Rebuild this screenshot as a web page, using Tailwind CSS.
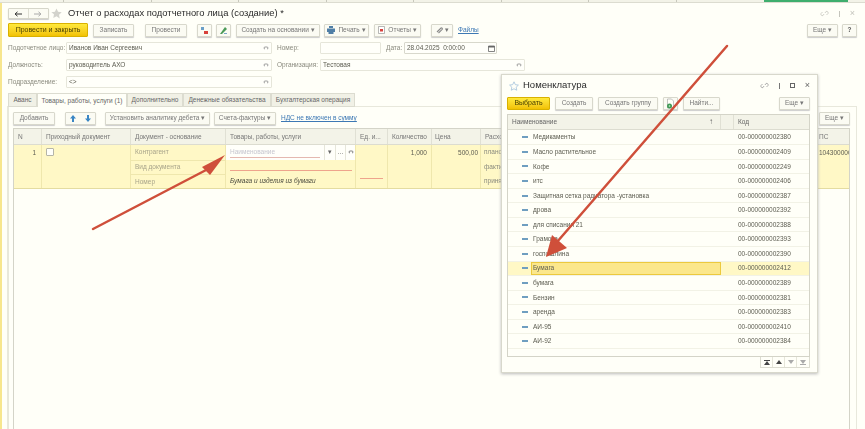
<!DOCTYPE html>
<html lang="ru">
<head>
<meta charset="UTF-8">
<title>Отчет о расходах подотчетного лица</title>
<script src="https://cdn.jsdelivr.net/npm/@tailwindcss/browser@4"></script>
</head>
<body class="bg-[#fffff8] font-['Liberation_Sans',sans-serif] text-[6.5px] text-[#5c5c50] overflow-hidden">
<div class="relative w-[865px] h-[429px] overflow-hidden whitespace-nowrap blur-[0.5px]">

  <!-- top strip with open sections -->
  <div class="flex h-[3px] bg-[#f3f3e8] border-b border-[#dcdcd0]">
    <div class="w-[64px] border-r border-[#c8c8bc]"></div>
    <div class="w-[87.500px] border-r border-[#c8c8bc]"></div>
    <div class="w-[87.500px] border-r border-[#c8c8bc]"></div>
    <div class="w-[87.500px] border-r border-[#c8c8bc]"></div>
    <div class="w-[87.500px] border-r border-[#c8c8bc]"></div>
    <div class="w-[87.500px] border-r border-[#c8c8bc]"></div>
    <div class="w-[87.500px] border-r border-[#c8c8bc]"></div>
    <div class="w-[87.500px] border-r border-[#c8c8bc]"></div>
    <div class="ml-[87.500px] w-[84px] bg-[#3fae6e]"></div>
  </div>
  <div class="flex h-[426px]">
    <div class="w-[2px] bg-[#f7e68e] shrink-0"></div>
    <div class="flex-1 pl-[6px] pr-[9px] flex flex-col">

      <!-- title row -->
      <div class="flex items-center h-[19px] mt-[1px]">
        <div class="flex h-[11px] w-[41px] border border-[#d6d6ca] rounded-[1px] bg-[#fbfbf3] shadow-[0_1px_1px_#ccc]">
          <div class="w-1/2 flex items-center justify-center border-r border-[#deded2]">
            <svg width="8" height="6" viewBox="0 0 8 6"><path d="M8 3H2M3.500 .8 1 3l2.500 2.200" fill="none" stroke="#333" stroke-width="1"/></svg>
          </div>
          <div class="w-1/2 flex items-center justify-center">
            <svg width="8" height="6" viewBox="0 0 8 6"><path d="M0 3h6M4.500 .8 7 3 4.500 5.200" fill="none" stroke="#aaa" stroke-width="1"/></svg>
          </div>
        </div>
        <svg class="ml-[2px]" width="11" height="11" viewBox="0 0 24 24"><path d="m12 1 3.400 7.300 7.900 1-5.800 5.500 1.500 7.900L12 18l-7 3.700 1.500-7.900L.7 9.300l7.900-1z" fill="#d3d3cc"/></svg>
        <span class="ml-[6px] text-[9.400px] text-[#2b2b2b]">Отчет о расходах подотчетного лица (создание) *</span>
        <div class="ml-auto mr-[-5px] flex items-center gap-[10px]">
          <svg width="9" height="9" viewBox="0 0 9 9"><path d="M4 5 3 6.500a1.500 1.500 0 0 1-2-2L2.500 3M5 4l1-1.500a1.500 1.500 0 0 1 2 2L6.500 6" fill="none" stroke="#c4c4bc" stroke-width=".8"/></svg>
          <div class="w-[1px] h-[6px] bg-[#c4c4bc]"></div>
          <span class="text-[9px] leading-none text-[#c4c4bc]">×</span>
        </div>
      </div>

      <!-- command bar -->
      <div class="flex items-center h-[14px] text-[#777]">
        <button class="w-[80px] h-[14px] rounded-[1px] bg-gradient-to-b from-[#ffe93a] to-[#f2c200] border border-[#d9b100] text-[#4a4000] text-[7px]">Провести и закрыть</button>
        <button class="ml-[5px] w-[41px] h-[13px] border border-[#d8d8cc] rounded-[1px] bg-[#fbfbf3] shadow-[0_1px_1px_#ccc]">Записать</button>
        <button class="ml-[11px] w-[42px] h-[13px] border border-[#d8d8cc] rounded-[1px] bg-[#fbfbf3] shadow-[0_1px_1px_#ccc]">Провести</button>
        <button class="ml-[10px] w-[15px] h-[13px] border border-[#d8d8cc] rounded-[1px] bg-[#fbfbf3] shadow-[0_1px_1px_#ccc] flex items-center justify-center">
          <svg width="9" height="9" viewBox="0 0 9 9"><path d="M1 1h3v3H1z" fill="#6a9fc8"/><path d="M4 5h4v3H4z" fill="#d8413c"/></svg>
        </button>
        <button class="ml-[4px] w-[15px] h-[13px] border border-[#d8d8cc] rounded-[1px] bg-[#fbfbf3] shadow-[0_1px_1px_#ccc] flex items-center justify-center">
          <svg width="9" height="9" viewBox="0 0 9 9"><path d="M1 8 6 1l2 2-5 5z" fill="#4b9a58"/><path d="M5 7h3v1H5z" fill="#7aa6c8"/></svg>
        </button>
        <button class="ml-[5px] w-[84px] h-[13px] border border-[#d8d8cc] rounded-[1px] bg-[#fbfbf3] shadow-[0_1px_1px_#ccc]">Создать на основании ▾</button>
        <button class="ml-[4px] w-[45px] h-[13px] border border-[#d8d8cc] rounded-[1px] bg-[#fbfbf3] shadow-[0_1px_1px_#ccc] flex items-center justify-center gap-[3px]">
          <svg width="8" height="8" viewBox="0 0 8 8"><path d="M2 0h4v2H2zM0 2.500h8V6H6.500v2h-5V6H0z" fill="#4f7ea6"/></svg>Печать ▾
        </button>
        <button class="ml-[5px] w-[47px] h-[13px] border border-[#d8d8cc] rounded-[1px] bg-[#fbfbf3] shadow-[0_1px_1px_#ccc] flex items-center justify-center gap-[3px]">
          <svg width="7" height="8" viewBox="0 0 7 8"><path d="M.5.500h6v7h-6z" fill="#fff" stroke="#999" stroke-width=".7"/><path d="M2 3h3v2.500H2z" fill="#d8413c"/></svg>Отчеты ▾
        </button>
        <button class="ml-[10px] w-[22px] h-[13px] border border-[#d8d8cc] rounded-[1px] bg-[#fbfbf3] shadow-[0_1px_1px_#ccc] flex items-center justify-center gap-[2px]">
          <svg width="7" height="7" viewBox="0 0 7 7"><path d="M1 5 5 1a1 1 0 0 1 1.300 1.300L2.500 6" fill="none" stroke="#888" stroke-width="1.100"/></svg>▾
        </button>
        <a class="ml-[5px] text-[#3d78b4] underline">Файлы</a>
        <button class="ml-auto mr-[4px] w-[31px] h-[13px] border border-[#d8d8cc] rounded-[1px] bg-[#fbfbf3] shadow-[0_1px_1px_#ccc]">Еще ▾</button>
        <button class="mr-[-7px] w-[15px] h-[13px] border border-[#d8d8cc] rounded-[1px] bg-[#fbfbf3] shadow-[0_1px_1px_#ccc] font-bold text-[#555]">?</button>
      </div>

      <!-- header fields -->
      <div class="flex items-center h-[12px] mt-[5px]">
        <span class="w-[58px] text-[#8a8a7e]">Подотчетное лицо:</span>
        <div class="w-[206px] h-[12px] border border-[#e6e6da] rounded-[1px] bg-[#fffffa] flex items-center justify-between px-[2px]"><span>Иванов Иван Сергеевич</span><svg width="6" height="6" viewBox="0 0 6 6"><path d="M2 4a1 1 0 0 1 0-2h2a1 1 0 0 1 0 2" fill="none" stroke="#888" stroke-width=".8"/></svg></div>
        <span class="ml-[5px] w-[43px] text-[#8a8a7e]">Номер:</span>
        <div class="w-[61px] h-[12px] border border-[#e6e6da] rounded-[1px] bg-[#fffffa]"></div>
        <span class="ml-[5px] w-[18px] text-[#8a8a7e]">Дата:</span>
        <div class="w-[93px] h-[12px] border border-[#d8d8cc] rounded-[1px] bg-[#fffffa] flex items-center justify-between pl-[2px] pr-[1px]"><span>28.04.2025 &nbsp;0:00:00</span><svg width="7" height="7" viewBox="0 0 7 7"><path d="M.5 1h6v5.500h-6z" fill="none" stroke="#666" stroke-width=".8"/><path d="M.5 1h6v1.500h-6z" fill="#666"/></svg></div>
      </div>
      <div class="flex items-center h-[12px] mt-[5px]">
        <span class="w-[58px] text-[#8a8a7e]">Должность:</span>
        <div class="w-[206px] h-[12px] border border-[#e6e6da] rounded-[1px] bg-[#fffffa] flex items-center justify-between px-[2px]"><span>руководитель АХО</span><svg width="6" height="6" viewBox="0 0 6 6"><path d="M2 4a1 1 0 0 1 0-2h2a1 1 0 0 1 0 2" fill="none" stroke="#888" stroke-width=".8"/></svg></div>
        <span class="ml-[5px] w-[43px] text-[#8a8a7e]">Организация:</span>
        <div class="w-[205px] h-[12px] border border-[#e6e6da] rounded-[1px] bg-[#fffffa] flex items-center justify-between px-[2px]"><span>Тестовая</span><svg width="6" height="6" viewBox="0 0 6 6"><path d="M2 4a1 1 0 0 1 0-2h2a1 1 0 0 1 0 2" fill="none" stroke="#888" stroke-width=".8"/></svg></div>
      </div>
      <div class="flex items-center h-[12px] mt-[5px]">
        <span class="w-[58px] text-[#8a8a7e]">Подразделение:</span>
        <div class="w-[206px] h-[12px] border border-[#e6e6da] rounded-[1px] bg-[#fffffa] flex items-center justify-between px-[2px]"><span>&lt;&gt;</span><svg width="6" height="6" viewBox="0 0 6 6"><path d="M2 4a1 1 0 0 1 0-2h2a1 1 0 0 1 0 2" fill="none" stroke="#888" stroke-width=".8"/></svg></div>
      </div>

      <!-- tabs -->
      <div class="flex h-[14px] mt-[5px] relative z-10 text-[#666]">
        <div class="w-[29px] flex items-center justify-center bg-[#f1f1e6] border border-[#dcdcd0]">Аванс</div>
        <div class="w-[90px] flex items-center justify-center bg-[#fffff8] border-t border-x border-[#dcdcd0]">Товары, работы, услуги (1)</div>
        <div class="w-[56px] flex items-center justify-center bg-[#f1f1e6] border border-[#dcdcd0]">Дополнительно</div>
        <div class="w-[88px] flex items-center justify-center bg-[#f1f1e6] border border-[#dcdcd0]">Денежные обязательства</div>
        <div class="w-[84px] flex items-center justify-center bg-[#f1f1e6] border border-[#dcdcd0]">Бухгалтерская операция</div>
      </div>

      <!-- tab panel -->
      <div class="flex-1 mt-[-1px] ml-[-1px] mr-[-7px] border-l-2 border-r border-t border-[#e8e8dc] pl-[4px] pr-[6px] flex flex-col">
        <div class="flex items-center h-[14px] mt-[4px] text-[#777]">
          <button class="w-[42px] h-[13px] border border-[#d8d8cc] rounded-[1px] bg-[#fbfbf3] shadow-[0_1px_1px_#ccc]">Добавить</button>
          <div class="ml-[10px] flex w-[31px] h-[13px] border border-[#d8d8cc] rounded-[1px] bg-[#fbfbf3] shadow-[0_1px_1px_#ccc]">
            <div class="w-1/2 flex items-center justify-center"><svg width="6" height="7" viewBox="0 0 6 7"><path d="M3 0 6 3.500H4V7H2V3.500H0z" fill="#3a86c4"/></svg></div>
            <div class="w-1/2 flex items-center justify-center"><svg width="6" height="7" viewBox="0 0 6 7"><path d="M3 7 0 3.500h2V0h2v3.500h2z" fill="#3a86c4"/></svg></div>
          </div>
          <button class="ml-[9px] w-[105px] h-[13px] border border-[#d8d8cc] rounded-[1px] bg-[#fbfbf3] shadow-[0_1px_1px_#ccc]">Установить аналитику дебета ▾</button>
          <button class="ml-[4px] w-[62px] h-[13px] border border-[#d8d8cc] rounded-[1px] bg-[#fbfbf3] shadow-[0_1px_1px_#ccc]">Счета-фактуры ▾</button>
          <a class="ml-[5px] text-[#3d78b4] underline">НДС не включен в сумму</a>
          <button class="ml-auto w-[31px] h-[13px] border border-[#d8d8cc] rounded-[1px] bg-[#fbfbf3] shadow-[0_1px_1px_#ccc]">Еще ▾</button>
        </div>

        <!-- document table -->
        <div class="mt-[3px] flex-1 border-l border-r border-t border-[#d4d4c8]">
          <div class="grid grid-cols-[28px_89px_95px_130px_32px_44px_49px_337px_1fr] h-[16px] bg-[#f3f3e8] border-b border-[#dcdcd0] text-[#777]">
            <div class="flex items-center pl-[4px] border-r border-[#e0e0d4]">N</div>
            <div class="flex items-center pl-[4px] border-r border-[#e0e0d4]">Приходный документ</div>
            <div class="flex items-center pl-[4px] border-r border-[#e0e0d4]">Документ - основание</div>
            <div class="flex items-center pl-[4px] border-r border-[#e0e0d4]">Товары, работы, услуги</div>
            <div class="flex items-center pl-[4px] border-r border-[#e0e0d4]">Ед. и...</div>
            <div class="flex items-center pl-[4px] border-r border-[#e0e0d4]">Количество</div>
            <div class="flex items-center pl-[3px] border-r border-[#e0e0d4]">Цена</div>
            <div class="flex items-center pl-[4px] border-r border-[#e0e0d4]">Расход</div>
            <div class="flex items-center pl-[1px]">ПС</div>
          </div>
          <div class="grid grid-cols-[28px_89px_95px_130px_32px_44px_49px_337px_1fr] h-[44px] bg-[#fff8c6] border-b border-[#e4dca0]">
            <div class="text-right pr-[5px] pt-[3px] border-r border-[#efe7ad]">1</div>
            <div class="pl-[4px] pt-[3px] border-r border-[#efe7ad]"><div class="w-[8px] h-[8px] border border-[#b5b5a8] bg-[#fffffa] rounded-[1px]"></div></div>
            <div class="border-r border-[#efe7ad] text-[#a8a48a] flex flex-col">
              <div class="h-[14.500px] pl-[4px] flex items-center">Контрагент</div>
              <div class="h-[14.500px] pl-[4px] flex items-center border-t border-[#efe7ad]">Вид документа</div>
              <div class="h-[14px] pl-[4px] flex items-center border-t border-[#efe7ad]">Номер</div>
            </div>
            <div class="border-r border-[#efe7ad] flex flex-col">
              <div class="h-[14.500px] bg-[#fffffa] flex items-center">
                <div class="ml-[4px] w-[90px] border-b border-[#e4b8b0] text-[#c6c6cf] leading-[10px]">Наименование</div>
                <div class="ml-auto flex h-full text-[#666]">
                  <span class="w-[11px] flex items-center justify-center border-l border-[#e6e6da]">▾</span>
                  <span class="w-[10px] flex items-center justify-center border-l border-[#e6e6da]">...</span>
                  <span class="w-[10px] flex items-center justify-center border-l border-[#e6e6da]"><svg width="6" height="6" viewBox="0 0 6 6"><path d="M2 4a1 1 0 0 1 0-2h2a1 1 0 0 1 0 2" fill="none" stroke="#666" stroke-width=".8"/></svg></span>
                </div>
              </div>
              <div class="h-[14.500px] pl-[4px] pr-[3px] pt-[2px]"><div class="h-[9px] border-b border-[#eea48c]"></div></div>
              <div class="h-[14px] pl-[4px] flex items-center italic text-[#4a4a3e]">Бумага и изделия из бумаги</div>
            </div>
            <div class="border-r border-[#efe7ad] px-[4px] pt-[33px]"><div class="border-b border-[#eea48c]"></div></div>
            <div class="border-r border-[#efe7ad] text-right pr-[4px] pt-[3px]">1,000</div>
            <div class="border-r border-[#efe7ad] text-right pr-[2px] pt-[3px]">500,00</div>
            <div class="border-r border-[#efe7ad] pl-[3px] text-[#8a8a7e] flex flex-col">
              <div class="h-[14.500px] flex items-center">плановые</div>
              <div class="h-[14.500px] flex items-center">фактические</div>
              <div class="h-[14px] flex items-center">принятые</div>
            </div>
            <div class="pt-[3px] pl-[1px] overflow-hidden">1043000004</div>
          </div>
        </div>
      </div>
    </div>
    <div class="w-[6px]"></div>
  </div>

  <!-- Номенклатура dialog -->
  <div class="absolute left-[501px] top-[74px] w-[317px] h-[299px] bg-[#fffff8] border border-[#d8d8cc] shadow-[0_1px_3px_#bbb] pl-[5px] pr-[7px] flex flex-col">
    <div class="flex items-center h-[21px]">
      <svg width="10" height="10" viewBox="0 0 24 24" class="ml-[2px]"><path d="m12 2 3.200 6.800 7.400 1-5.400 5.100 1.400 7.300L12 18.700l-6.600 3.500 1.400-7.300-5.400-5.100 7.400-1z" fill="none" stroke="#a6c4dc" stroke-width="2"/></svg>
      <span class="ml-[4px] text-[9.500px] text-[#2b2b2b]">Номенклатура</span>
      <div class="ml-auto flex items-center gap-[10px]">
        <svg width="9" height="9" viewBox="0 0 9 9"><path d="M4 5 3 6.500a1.500 1.500 0 0 1-2-2L2.500 3M5 4l1-1.500a1.500 1.500 0 0 1 2 2L6.500 6" fill="none" stroke="#999" stroke-width=".8"/></svg>
        <div class="w-[1px] h-[6px] bg-[#777]"></div>
        <div class="w-[5px] h-[5px] border border-[#666]"></div>
        <span class="text-[9px] leading-none text-[#666]">×</span>
      </div>
    </div>
    <div class="flex items-center h-[14px] text-[#777]">
      <button class="w-[43px] h-[13px] rounded-[1px] bg-gradient-to-b from-[#ffe93a] to-[#f2c200] border border-[#d9b100] text-[#4a4000] text-[7px]">Выбрать</button>
      <button class="ml-[5px] w-[38px] h-[13px] border border-[#d8d8cc] rounded-[1px] bg-[#fbfbf3] shadow-[0_1px_1px_#ccc]">Создать</button>
      <button class="ml-[5px] w-[60px] h-[13px] border border-[#d8d8cc] rounded-[1px] bg-[#fbfbf3] shadow-[0_1px_1px_#ccc]">Создать группу</button>
      <button class="ml-[5px] w-[15px] h-[13px] border border-[#d8d8cc] rounded-[1px] bg-[#fbfbf3] shadow-[0_1px_1px_#ccc] flex items-center justify-center">
        <svg width="9" height="11" viewBox="0 0 9 11"><path d="M1.500 1h4l2 2v7h-6z" fill="#fffff8" stroke="#aaa" stroke-width=".7"/><circle cx="3.500" cy="8" r="2.500" fill="#3f9a55"/><circle cx="3.500" cy="8" r=".8" fill="#d8ecd8"/></svg>
      </button>
      <button class="ml-[5px] w-[37px] h-[13px] border border-[#d8d8cc] rounded-[1px] bg-[#fbfbf3] shadow-[0_1px_1px_#ccc]">Найти...</button>
      <button class="ml-auto w-[31px] h-[13px] border border-[#d8d8cc] rounded-[1px] bg-[#fbfbf3] shadow-[0_1px_1px_#ccc]">Еще ▾</button>
    </div>
    <div class="mt-[4px] h-[243px] border border-[#d4d4c8] flex flex-col">
      <div class="grid grid-cols-[213px_13px_1fr] h-[15px] shrink-0 bg-[#f3f3e8] border-b border-[#dcdcd0] text-[#666]">
        <div class="flex items-center justify-between pl-[4px] pr-[7px] border-r border-[#e0e0d4]"><span>Наименование</span><span class="text-[8px]">↑</span></div>
        <div class="border-r border-[#e0e0d4]"></div>
        <div class="flex items-center pl-[4px]">Код</div>
      </div>
      <div class="flex flex-col mt-[0.5px]">
        <div class="grid grid-cols-[213px_13px_1fr] h-[14.570px] items-center border-b border-[#f2f2e6]"><div class="flex items-center pl-[14px] gap-[5px]"><span class="w-[6px] h-[2px] bg-[#6f9ec0]"></span>Медикаменты</div><div></div><div class="pl-[4px]">00-000000002380</div></div>
        <div class="grid grid-cols-[213px_13px_1fr] h-[14.570px] items-center border-b border-[#f2f2e6]"><div class="flex items-center pl-[14px] gap-[5px]"><span class="w-[6px] h-[2px] bg-[#6f9ec0]"></span>Масло растительное</div><div></div><div class="pl-[4px]">00-000000002409</div></div>
        <div class="grid grid-cols-[213px_13px_1fr] h-[14.570px] items-center border-b border-[#f2f2e6]"><div class="flex items-center pl-[14px] gap-[5px]"><span class="w-[6px] h-[2px] bg-[#6f9ec0]"></span>Кофе</div><div></div><div class="pl-[4px]">00-000000002249</div></div>
        <div class="grid grid-cols-[213px_13px_1fr] h-[14.570px] items-center border-b border-[#f2f2e6]"><div class="flex items-center pl-[14px] gap-[5px]"><span class="w-[6px] h-[2px] bg-[#6f9ec0]"></span>итс</div><div></div><div class="pl-[4px]">00-000000002406</div></div>
        <div class="grid grid-cols-[213px_13px_1fr] h-[14.570px] items-center border-b border-[#f2f2e6]"><div class="flex items-center pl-[14px] gap-[5px]"><span class="w-[6px] h-[2px] bg-[#6f9ec0]"></span>Защитная сетка радиатора -установка</div><div></div><div class="pl-[4px]">00-000000002387</div></div>
        <div class="grid grid-cols-[213px_13px_1fr] h-[14.570px] items-center border-b border-[#f2f2e6]"><div class="flex items-center pl-[14px] gap-[5px]"><span class="w-[6px] h-[2px] bg-[#6f9ec0]"></span>дрова</div><div></div><div class="pl-[4px]">00-000000002392</div></div>
        <div class="grid grid-cols-[213px_13px_1fr] h-[14.570px] items-center border-b border-[#f2f2e6]"><div class="flex items-center pl-[14px] gap-[5px]"><span class="w-[6px] h-[2px] bg-[#6f9ec0]"></span>для списания 21</div><div></div><div class="pl-[4px]">00-000000002388</div></div>
        <div class="grid grid-cols-[213px_13px_1fr] h-[14.570px] items-center border-b border-[#f2f2e6]"><div class="flex items-center pl-[14px] gap-[5px]"><span class="w-[6px] h-[2px] bg-[#6f9ec0]"></span>Грамота</div><div></div><div class="pl-[4px]">00-000000002393</div></div>
        <div class="grid grid-cols-[213px_13px_1fr] h-[14.570px] items-center border-b border-[#f2f2e6]"><div class="flex items-center pl-[14px] gap-[5px]"><span class="w-[6px] h-[2px] bg-[#6f9ec0]"></span>госпошлина</div><div></div><div class="pl-[4px]">00-000000002390</div></div>
        <div class="grid grid-cols-[213px_13px_1fr] h-[14.570px] items-center bg-[#fff8c6] border-b border-[#f2f2e6]"><div class="flex items-center h-full"><span class="ml-[14px] w-[6px] h-[2px] bg-[#6f9ec0]"></span><div class="ml-[3px] h-full flex-1 flex items-center pl-[1px] bg-[#fbe78c] border border-[#ecc93e]">Бумага</div></div><div></div><div class="pl-[4px]">00-000000002412</div></div>
        <div class="grid grid-cols-[213px_13px_1fr] h-[14.570px] items-center border-b border-[#f2f2e6]"><div class="flex items-center pl-[14px] gap-[5px]"><span class="w-[6px] h-[2px] bg-[#6f9ec0]"></span>бумага</div><div></div><div class="pl-[4px]">00-000000002389</div></div>
        <div class="grid grid-cols-[213px_13px_1fr] h-[14.570px] items-center border-b border-[#f2f2e6]"><div class="flex items-center pl-[14px] gap-[5px]"><span class="w-[6px] h-[2px] bg-[#6f9ec0]"></span>Бензин</div><div></div><div class="pl-[4px]">00-000000002381</div></div>
        <div class="grid grid-cols-[213px_13px_1fr] h-[14.570px] items-center border-b border-[#f2f2e6]"><div class="flex items-center pl-[14px] gap-[5px]"><span class="w-[6px] h-[2px] bg-[#6f9ec0]"></span>аренда</div><div></div><div class="pl-[4px]">00-000000002383</div></div>
        <div class="grid grid-cols-[213px_13px_1fr] h-[14.570px] items-center border-b border-[#f2f2e6]"><div class="flex items-center pl-[14px] gap-[5px]"><span class="w-[6px] h-[2px] bg-[#6f9ec0]"></span>АИ-95</div><div></div><div class="pl-[4px]">00-000000002410</div></div>
        <div class="grid grid-cols-[213px_13px_1fr] h-[14.570px] items-center border-b border-[#f2f2e6]"><div class="flex items-center pl-[14px] gap-[5px]"><span class="w-[6px] h-[2px] bg-[#6f9ec0]"></span>АИ-92</div><div></div><div class="pl-[4px]">00-000000002384</div></div>
      </div>
    </div>
    <div class="flex justify-end h-[11px]">
      <div class="flex border-x border-b border-[#dcdcd0]">
        <div class="w-[12px] flex items-center justify-center border-r border-[#e6e6da]"><svg width="6" height="5" viewBox="0 0 6 5"><path d="M0 0h6v1H0zM3 1 6 5H0z" fill="#444"/></svg></div>
        <div class="w-[12px] flex items-center justify-center border-r border-[#e6e6da]"><svg width="6" height="4" viewBox="0 0 6 4"><path d="M3 0 6 4H0z" fill="#444"/></svg></div>
        <div class="w-[12px] flex items-center justify-center border-r border-[#e6e6da]"><svg width="6" height="4" viewBox="0 0 6 4"><path d="M3 4 0 0h6z" fill="#aaa"/></svg></div>
        <div class="w-[12px] flex items-center justify-center"><svg width="6" height="5" viewBox="0 0 6 5"><path d="M0 4h6v1H0zM3 4 0 0h6z" fill="#aaa"/></svg></div>
      </div>
    </div>
  </div>

  <!-- red annotation arrows -->
  <svg class="absolute inset-0" width="865" height="429" viewBox="0 0 865 429">
    <path d="M93 229 208 169" stroke="#cf4f3a" stroke-width="2.500" stroke-linecap="round" fill="none"/>
    <path d="M225 155 202 167 210 175z" fill="#cf4f3a"/>
    <path d="M727 46 557 242" stroke="#cf4f3a" stroke-width="2.500" stroke-linecap="round" fill="none"/>
    <path d="M546 257 552 235 567 248z" fill="#cf4f3a"/>
  </svg>
</div>
</body>
</html>
